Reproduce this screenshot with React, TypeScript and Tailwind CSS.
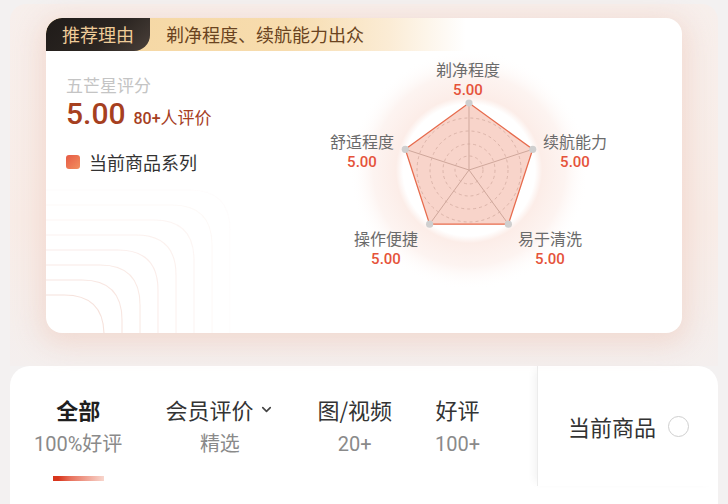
import { ChevronDown } from 'lucide-react'

const CX = 149
const CY = 115
const R = 67

const axes = [
  { name: '剃净程度', score: '5.00', x: 148, y: 3 },
  { name: '续航能力', score: '5.00', x: 255, y: 75 },
  { name: '易于清洗', score: '5.00', x: 230, y: 172 },
  { name: '操作便捷', score: '5.00', x: 66, y: 172 },
  { name: '舒适程度', score: '5.00', x: 42, y: 75 },
]

const tabs = [
  { title: '全部', sub: '100%好评', active: true },
  { title: '会员评价', sub: '精选', caret: true },
  { title: '图/视频', sub: '20+' },
  { title: '好评', sub: '100+' },
]

// vertex i of the pentagon, starting at the top and going clockwise
function vertex(i: number, r: number) {
  const a = -Math.PI / 2 + (i * 2 * Math.PI) / 5
  return [CX + r * Math.cos(a), CY + r * Math.sin(a)]
}

function Radar() {
  const pts = [0, 1, 2, 3, 4].map((i) => vertex(i, R))
  const poly = pts.map((p) => p.join(',')).join(' ')
  return (
    <div className="relative mt-[4px] h-[215px] w-[300px]">
      <svg width="300" height="215" viewBox="0 0 300 215" className="absolute inset-0 overflow-visible">
        <defs>
          <radialGradient id="halo" cx={CX} cy={CY} r="120" gradientUnits="userSpaceOnUse">
            <stop offset="0" stopColor="#fff" />
            <stop offset="0.55" stopColor="#fff" />
            <stop offset="0.61" stopColor="#fcede8" />
            <stop offset="0.8" stopColor="#fdf4f1" />
            <stop offset="1" stopColor="#fff" stopOpacity="0" />
          </radialGradient>
        </defs>
        <circle cx={CX} cy={CY} r="120" fill="url(#halo)" />
        <polygon points={poly} fill="#f5c6b8" fillOpacity="0.75" />
        {[14, 26, 39, 52].map((r) => (
          <circle
            key={r}
            cx={CX}
            cy={CY}
            r={r}
            fill="none"
            stroke="#cfa79b"
            strokeOpacity="0.7"
            strokeDasharray="3 3"
          />
        ))}
        {pts.map(([x, y], i) => (
          <line key={i} x1={CX} y1={CY} x2={x} y2={y} stroke="#cfa79b" strokeWidth="1" />
        ))}
        <polygon points={poly} fill="none" stroke="#e76c4e" strokeWidth="1.3" />
        {pts.map(([x, y], i) => (
          <circle key={i} cx={x} cy={y} r="3.6" fill="#cfcfcf" />
        ))}
      </svg>
      {axes.map((a) => (
        <div
          key={a.name}
          className="absolute flex -translate-x-1/2 flex-col items-center whitespace-nowrap"
          style={{ left: a.x, top: a.y }}
        >
          <span className="text-[16px] leading-[22px] text-[#6b6b6b]">{a.name}</span>
          <span className="font-['Roboto',sans-serif] text-[15px] font-medium leading-[20px] text-[#e5533a]">
            {a.score}
          </span>
        </div>
      ))}
    </div>
  )
}

function Waves() {
  const lines = [0, 1, 2, 3, 4, 5, 6, 7]
  return (
    <svg
      width="220"
      height="160"
      viewBox="0 0 220 160"
      className="pointer-events-none absolute bottom-0 left-0"
    >
      {lines.map((i) => {
        const y = 122 - i * 15
        const x = 58 + i * 18
        const r = 40
        return (
          <path
            key={i}
            d={`M0 ${y} H${x - r} Q${x} ${y} ${x} ${y + r} V160`}
            fill="none"
            stroke="#f5ddd6"
            strokeOpacity={0.85 - i * 0.11}
            strokeWidth="1.1"
          />
        )
      })}
    </svg>
  )
}

export default function App() {
  return (
    <div className="h-[504px] w-[728px] overflow-hidden bg-[#f3f1f1] px-[10px] pt-[4px] font-['Noto_Sans_CJK_SC',sans-serif]">
      <div className="h-[362px] rounded-t-[16px] bg-[linear-gradient(180deg,#f7efec_0%,#f8ece7_60%,#f4efee_100%)] px-[36px] pt-[14px]">
        <div className="relative h-[315px] overflow-hidden rounded-[16px] bg-white shadow-[0_6px_26px_6px_rgba(238,196,180,0.45)]">
          <Waves />
          <div className="relative flex h-[33px] bg-[linear-gradient(90deg,#f5d6a0_0%,#f7dcae_38%,#fbecd5_54%,rgba(255,255,255,0)_66%)]">
            <div className="flex w-[104px] items-center justify-center rounded-tl-[16px] rounded-br-[16px] bg-[linear-gradient(135deg,#1f1b19_0%,#2c2622_60%,#4a403a_100%)] text-[18px] text-[#efcc98]">
              推荐理由
            </div>
            <div className="flex items-center pl-[16px] text-[18px] text-[#6a4320]">
              剃净程度、续航能力出众
            </div>
          </div>
          <div className="relative flex">
            <div className="w-[274px] pl-[20px] pt-[22px]">
              <div className="text-[17px] leading-[24px] text-[#c4c4c4]">五芒星评分</div>
              <div className="flex items-baseline gap-[8px] leading-[34px]">
                <span className="font-['Roboto',sans-serif] text-[30px] font-medium text-[#a6401f]">
                  5.00
                </span>
                <span className="text-[17px] text-[#a6401f]">
                  <span className="font-['Roboto',sans-serif] text-[16px] font-medium">80+</span>
                  人评价
                </span>
              </div>
              <div className="mt-[14px] flex items-center gap-[9px]">
                <span className="h-[14px] w-[14px] rounded-[3px] bg-[linear-gradient(135deg,#e65a45,#f2905f)]" />
                <span className="text-[18px] leading-[24px] text-[#333]">当前商品系列</span>
              </div>
            </div>
            <Radar />
          </div>
        </div>
      </div>

      <div className="flex h-[138px] rounded-t-[20px] bg-white">
        <div className="flex flex-1 gap-[43px] pl-[24px] pt-[29px]">
          {tabs.map((t) => (
            <div key={t.title} className="flex flex-col items-center">
              <div className="flex items-center gap-[6px]">
                <span
                  className={
                    t.active
                      ? 'text-[22px] font-bold leading-[28px] text-[#1f1f1f]'
                      : 'text-[22px] leading-[28px] text-[#333]'
                  }
                >
                  {t.title}
                </span>
                {t.caret && <ChevronDown size={15} strokeWidth={2.6} color="#444" />}
              </div>
              <span className="mt-[8px] font-['Roboto','Noto_Sans_CJK_SC',sans-serif] text-[20px] leading-[26px] text-[#8a8a8a]">
                {t.sub}
              </span>
              {t.active && (
                <span className="mt-[19px] h-[5px] w-[51px] bg-[linear-gradient(90deg,#d8351c_0%,#d8351c_10%,#e8735e_35%,#f8d6cd_100%)]" />
              )}
            </div>
          ))}
        </div>
        <div className="flex h-[120px] w-[181px] items-center gap-[12px] rounded-tr-[20px] border-l border-[#ececec] pl-[30px] shadow-[-6px_0_8px_-4px_rgba(0,0,0,0.06)]">
          <span className="text-[22px] leading-[28px] text-[#333]">当前商品</span>
          <span className="h-[21px] w-[21px] rounded-full border-[1.5px] border-[#cfcfcf]" />
        </div>
      </div>
    </div>
  )
}
